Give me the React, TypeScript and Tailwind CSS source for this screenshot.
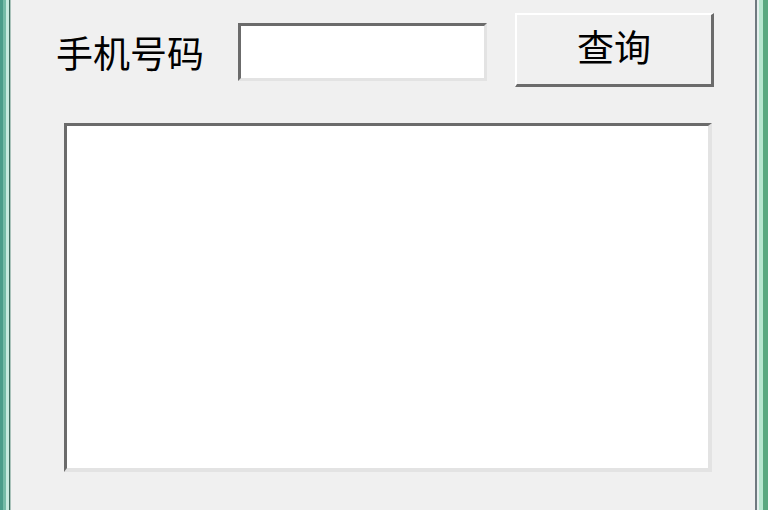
import React, { useState } from 'react';

const App: React.FC = () => {
  const [phone, setPhone] = useState('');
  const [result, setResult] = useState('');

  return (
    <div
      className="flex w-[768px] h-[510px] bg-[#f0f0f0] overflow-hidden text-black"
      style={{ fontFamily: '"Noto Sans CJK SC", "Noto Sans", sans-serif' }}
    >
      {/* Left window frame */}
      <div className="flex shrink-0 h-full">
        <div className="w-[3px] bg-[#4a9c8a]" />
        <div className="w-[3px] bg-[#74bba7]" />
        <div className="w-[3px] bg-[#c6eadf]" />
        <div className="w-[1px] bg-[#3d6b5f]" />
        <div className="w-[1px] bg-[#a9c2ba]" />
      </div>

      {/* Dialog body */}
      <div className="flex-1 flex flex-col pt-[13px]">
        <div className="flex items-start pl-[45px]">
          <span className="mt-[21px] w-[148px] text-[37px] leading-[37px] whitespace-nowrap">
            手机号码
          </span>
          <input
            value={phone}
            onChange={(e) => setPhone(e.target.value)}
            className="ml-[34px] mt-[10px] w-[249px] h-[58px] bg-white outline-none border-t-[3px] border-l-[3px] border-t-[#6b6b6b] border-l-[#6b6b6b] border-b-[3px] border-r-[3px] border-b-[#e3e3e3] border-r-[#e3e3e3] text-[28px] px-1"
          />
          <button
            onClick={() => setResult(phone)}
            className="ml-[28px] w-[199px] h-[74px] bg-[#f0f0f0] border-t-2 border-l-2 border-t-white border-l-white border-b-[3px] border-r-[3px] border-b-[#6b6b6b] border-r-[#6b6b6b] flex items-center justify-center pb-[6px]"
          >
            <span className="text-[37px] leading-[37px]">查询</span>
          </button>
        </div>

        <textarea
          value={result}
          onChange={(e) => setResult(e.target.value)}
          className="ml-[53px] mt-[36px] w-[648px] h-[349px] bg-white resize-none outline-none border-t-[3px] border-l-[3px] border-t-[#6b6b6b] border-l-[#6b6b6b] border-b-[4px] border-r-[4px] border-b-[#e3e3e3] border-r-[#e3e3e3]"
        />
      </div>

      {/* Right window frame */}
      <div className="flex shrink-0 h-full">
        <div className="w-[2px] bg-[#707a80]" />
        <div className="w-[2px] bg-[#e6efee]" />
        <div className="w-[4px] bg-[#b6e6cf]" />
        <div className="w-[5px] bg-[#5aa880]" />
      </div>
    </div>
  );
};

export default App;
